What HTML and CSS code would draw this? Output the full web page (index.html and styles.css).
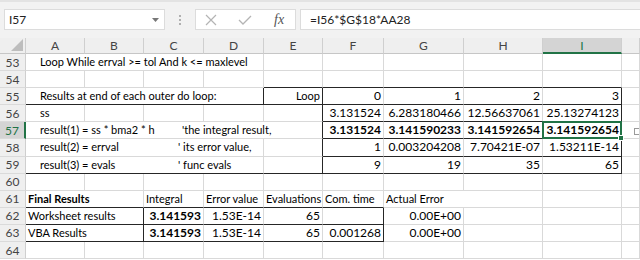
FILE: index.html
```html
<html>
  <head>
    <title>Romberg results</title>
    <link rel="stylesheet" href="styles.css">
  </head>
  <body>
    <div class="toolbar">
      <div class="namebox">
        <span>I57</span>
        <svg class="drop" width="7" height="4" viewBox="0 0 7 4"><polygon points="0,0 7,0 3.5,4" fill="#777"/></svg>
      </div>
      <div class="grip"><i></i><i></i><i></i></div>
      <div class="fxbox">
        <svg width="12" height="12" viewBox="0 0 12 12"><path d="M1 1 L11 11 M11 1 L1 11" stroke="#b4b4b4" stroke-width="1.2" fill="none"/></svg>
        <svg width="14" height="12" viewBox="0 0 14 12"><path d="M1 6 L5 10 L13 2" stroke="#b4b4b4" stroke-width="1.3" fill="none"/></svg>
        <span class="fx">fx</span>
      </div>
      <div class="formula">=I56*$G$18*AA28</div>
    </div>

    <div class="sheet">
      <!-- column headers -->
      <div class="hd corner">
        <svg width="12" height="12" viewBox="0 0 12 12"><polygon points="12,0 12,12 0,12" fill="#bdbdbd"/></svg>
      </div>
      <div class="hd">A</div>
      <div class="hd">B</div>
      <div class="hd">C</div>
      <div class="hd">D</div>
      <div class="hd">E</div>
      <div class="hd">F</div>
      <div class="hd">G</div>
      <div class="hd">H</div>
      <div class="hd on">I</div>
      <div class="hd"></div>

      <!-- 53 -->
      <div class="rh">53</div>
      <div class="c s4 ind">Loop While errval &gt;= tol And k &lt;= maxlevel</div>
      <div class="c"></div><div class="c"></div><div class="c"></div><div class="c"></div><div class="c"></div><div class="c"></div>

      <!-- 54 -->
      <div class="rh">54</div>
      <div class="c"></div><div class="c"></div><div class="c"></div><div class="c"></div>
      <div class="c db"></div><div class="c db"></div><div class="c db"></div><div class="c db"></div><div class="c db"></div>
      <div class="c"></div>

      <!-- 55 -->
      <div class="rh">55</div>
      <div class="c s4 ind db dr">Results at end of each outer do loop:</div>
      <div class="c r t db dr">Loop</div>
      <div class="c r db">0</div>
      <div class="c r db">1</div>
      <div class="c r db">2</div>
      <div class="c r db dr">3</div>
      <div class="c"></div>

      <!-- 56 -->
      <div class="rh">56</div>
      <div class="c ind">ss</div>
      <div class="c"></div><div class="c"></div><div class="c"></div>
      <div class="c dr"></div>
      <div class="c r db">3.131524</div>
      <div class="c r db">6.283180466</div>
      <div class="c r db">12.56637061</div>
      <div class="c r db dr">25.13274123</div>
      <div class="c"></div>

      <!-- 57 -->
      <div class="rh on">57</div>
      <div class="c s5 ind dr"><span class="code wide">result(1) = ss * bma2 * h</span>'the integral result,</div>
      <div class="c r b db">3.131524</div>
      <div class="c r b db">3.141590233</div>
      <div class="c r b db">3.141592654</div>
      <div class="c r b db dr sel">3.141592654</div>
      <div class="c"><span class="qa"></span></div>

      <!-- 58 -->
      <div class="rh">58</div>
      <div class="c s4 ind"><span class="code">result(2) = errval</span>' its error value,</div>
      <div class="c dr"></div>
      <div class="c r db">1</div>
      <div class="c r db">0.003204208</div>
      <div class="c r db">7.70421E-07</div>
      <div class="c r db dr">1.53211E-14</div>
      <div class="c"></div>

      <!-- 59 -->
      <div class="rh">59</div>
      <div class="c s4 ind db"><span class="code">result(3) = evals</span>' func evals</div>
      <div class="c db dr"></div>
      <div class="c r db">9</div>
      <div class="c r db">19</div>
      <div class="c r db">35</div>
      <div class="c r db dr">65</div>
      <div class="c"></div>

      <!-- 60 -->
      <div class="rh">60</div>
      <div class="c"></div><div class="c"></div><div class="c"></div><div class="c"></div><div class="c"></div>
      <div class="c"></div><div class="c"></div><div class="c"></div><div class="c"></div><div class="c"></div>

      <!-- 61 -->
      <div class="rh">61</div>
      <div class="c s2 b db">Final Results</div>
      <div class="c db">Integral</div>
      <div class="c db">Error value</div>
      <div class="c db">Evaluations</div>
      <div class="c db">Com. time</div>
      <div class="c s2">Actual Error</div>
      <div class="c"></div>
      <div class="c"></div>

      <!-- 62 -->
      <div class="rh">62</div>
      <div class="c s2 db dr">Worksheet results</div>
      <div class="c r b db">3.141593</div>
      <div class="c r db">1.53E-14</div>
      <div class="c r db">65</div>
      <div class="c db dr"></div>
      <div class="c r">0.00E+00</div>
      <div class="c"></div><div class="c"></div><div class="c"></div>

      <!-- 63 -->
      <div class="rh">63</div>
      <div class="c s2 db dr">VBA Results</div>
      <div class="c r b db">3.141593</div>
      <div class="c r db">1.53E-14</div>
      <div class="c r db">65</div>
      <div class="c r db dr">0.001268</div>
      <div class="c r">0.00E+00</div>
      <div class="c"></div><div class="c"></div><div class="c"></div>

      <!-- 64 -->
      <div class="rh">64</div>
      <div class="c"></div><div class="c"></div><div class="c"></div><div class="c"></div><div class="c"></div>
      <div class="c"></div><div class="c"></div><div class="c"></div><div class="c"></div><div class="c"></div>
    </div>
  </body>
</html>
```

FILE: styles.css
```css
:root {
  --grid: #d9d9d9;
  --dark: #262626;
  --green: #217346;
  --head: #efefef;
}

html,
body {
  margin: 0;
  padding: 0;
  width: 640px;
  height: 260px;
  overflow: hidden;
  background: #fff;
  font-family: "Lato", "Open Sans", sans-serif;
  font-size: 11px;
  color: #000;
}

/* formula bar */

.toolbar {
  height: 38px;
  box-sizing: border-box;
  padding-top: 7px;
  background: #f2f2f2;
  border-top: 2px solid #e3e3e3;
  display: flex;
  align-items: flex-start;
  font-size: 12px;
}

.namebox {
  margin-left: 4px;
  width: 161px;
  height: 21px;
  box-sizing: border-box;
  background: #fff;
  border: 1px solid #dcdcdc;
  display: flex;
  align-items: center;
  justify-content: space-between;
  padding: 0 5px 0 4px;
  color: #222;
}

.grip {
  width: 30px;
  height: 21px;
  display: flex;
  flex-direction: column;
  align-items: center;
  justify-content: center;
  gap: 2px;
}

.grip i {
  width: 2px;
  height: 2px;
  background: #b0b0b0;
}

.fxbox {
  width: 101px;
  height: 21px;
  box-sizing: border-box;
  background: #fff;
  border: 1px solid #dcdcdc;
  display: flex;
  align-items: center;
  gap: 21px;
  padding-left: 9px;
}

.fx {
  font-family: "Liberation Serif", serif;
  font-style: italic;
  font-size: 14px;
  color: #555;
  margin-left: 1px;
}

.formula {
  flex: 1 1 auto;
  margin-left: 4px;
  height: 21px;
  box-sizing: border-box;
  background: #fff;
  border: 1px solid #dcdcdc;
  border-right: none;
  padding-left: 9px;
  line-height: 19px;
  color: #222;
}

/* sheet grid */

.sheet {
  display: grid;
  grid-template-columns: 26px 59px 59px 60px 60px 59px 61px 80px 79px 79px 18px;
  grid-template-rows: 16px repeat(12, 17.1px);
}

.hd,
.rh {
  background: var(--head);
  color: #444;
  box-sizing: border-box;
  border-right: 1px solid #cfcfcf;
  border-bottom: 1px solid #c6c6c6;
  display: flex;
  align-items: center;
  justify-content: center;
  font-size: 12px;
}

.hd.corner {
  justify-content: flex-end;
  align-items: flex-end;
  padding: 0 2px 2px 0;
}

.hd.on {
  background: #d4d4d4;
  color: var(--green);
  border-bottom: 2px solid var(--green);
}

.rh {
  border-bottom-color: #dadada;
}

.rh.on {
  background: #d4d4d4;
  color: var(--green);
  border-right: 2px solid var(--green);
}

.c {
  box-sizing: border-box;
  border-right: 1px solid var(--grid);
  border-bottom: 1px solid var(--grid);
  padding: 0 2px;
  white-space: nowrap;
  overflow: hidden;
  line-height: 16px;
  position: relative;
}

.s2 { grid-column: span 2; }
.s4 { grid-column: span 4; }
.s5 { grid-column: span 5; }

.ind { padding-left: 14px; }
.r { text-align: right; font-size: 12px; }
.r.t { font-size: 11px; }
.b { font-weight: bold; }
.db { border-bottom-color: var(--dark); }
.dr { border-right-color: var(--dark); }

.code {
  display: inline-block;
  width: 138px;
}

.code.wide {
  width: 142px;
}

.c.sel {
  overflow: visible;
}

.c.sel::after {
  content: "";
  position: absolute;
  left: -1px;
  top: -1px;
  right: -1px;
  bottom: -1px;
  border: 2px solid var(--green);
}

.c.sel::before {
  content: "";
  position: absolute;
  right: -3px;
  bottom: -3px;
  width: 4px;
  height: 4px;
  background: var(--green);
  border: 1px solid #fff;
  z-index: 1;
}

.qa {
  position: absolute;
  left: 12px;
  top: 6px;
  width: 5px;
  height: 5px;
  border: 1px solid #9a9a9a;
}
```
